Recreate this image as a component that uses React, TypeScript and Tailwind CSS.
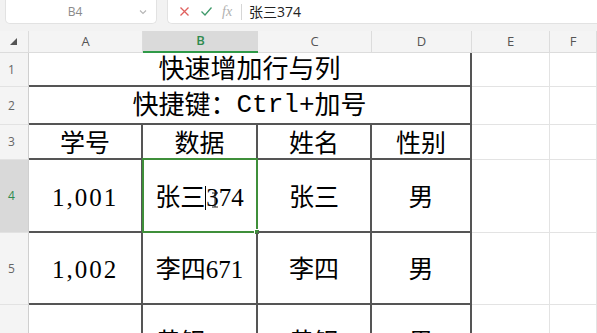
import React from 'react';

const rows = [
  ['学号', '数据', '姓名', '性别'],
  ['1,001', '张三374', '张三', '男'],
  ['1,002', '李四671', '李四', '男'],
  ['1,003', '黄银228', '黄银', '男'],
];

const cellFont = { fontFamily: "'Liberation Serif', 'Noto Sans CJK SC', serif" };

const RowHead: React.FC<{ n: number; active?: boolean }> = ({ n, active }) => (
  <div
    className={`flex items-center pl-[8px] text-[12px] border-r border-b border-r-[#cfcfcf] border-b-[#e2e2e2] ${
      active ? 'bg-[#d9d9d9] text-[#2f8a4e]' : 'bg-[#f4f4f4] text-[#666]'
    }`}
  >
    {n}
  </div>
);

const Blank: React.FC = () => <div className="border-r border-b border-[#e3e3e3]" />;

export default function App() {
  return (
    <div
      className="w-[597px] h-[333px] overflow-hidden bg-white flex flex-col"
      style={{ fontFamily: "'Open Sans', 'Noto Sans CJK SC', sans-serif" }}
    >
      {/* formula bar */}
      <div className="h-[31px] bg-[#f2f2f2] flex gap-[10px] pl-[5px] pb-[7px] shrink-0">
        <div className="w-[152px] bg-white border border-t-0 border-[#e2e2e2] rounded-b-[5px] flex items-center">
          <span className="flex-1 text-center text-[12px] text-[#8a8a8a] pl-[6px]">B4</span>
          <svg width="10" height="10" viewBox="0 0 10 10" className="mr-[8px]">
            <path d="M2 3.5 L5 6.5 L8 3.5" fill="none" stroke="#b5b5b5" strokeWidth="1.1" />
          </svg>
        </div>
        <div className="flex-1 bg-white border border-t-0 border-r-0 border-[#e2e2e2] rounded-bl-[5px] flex items-center pl-[11px]">
          <svg width="11" height="11" viewBox="0 0 11 11">
            <path d="M1.5 1.5 L9.5 9.5 M9.5 1.5 L1.5 9.5" stroke="#e0605e" strokeWidth="1.3" />
          </svg>
          <svg width="13" height="11" viewBox="0 0 13 11" className="ml-[10px]">
            <path d="M1.5 5.5 L5 9 L11.5 1.5" fill="none" stroke="#3f9a6a" strokeWidth="1.3" />
          </svg>
          <span className="ml-[9px] text-[14px] italic text-[#b0b0b0]" style={{ fontFamily: "'Liberation Serif', serif" }}>
            fx
          </span>
          <span className="ml-[9px] w-px h-[16px] bg-[#d6d6d6]" />
          <span className="ml-[7px] text-[14px] text-[#222]">张三374</span>
        </div>
      </div>

      {/* sheet */}
      <div className="grid grid-cols-[29px_114px_115px_114px_100px_78px_1fr] grid-rows-[22px_34px_38px_35px_73px_72px_73px]">
        {/* column headers */}
        <div className="bg-[#f4f4f4] border-r border-b border-[#dcdcdc] flex items-center pl-[10px]">
          <svg width="7" height="7" viewBox="0 0 7 7">
            <path d="M7 0 L7 7 L0 7 Z" fill="#555" />
          </svg>
        </div>
        {['A', 'B', 'C', 'D', 'E', 'F'].map((c) =>
          c === 'B' ? (
            <div
              key={c}
              className="bg-[#dadada] border-b-2 border-[#2f9a48] flex items-center justify-center text-[13px] font-semibold text-[#2f8a4e]"
            >
              {c}
            </div>
          ) : (
            <div
              key={c}
              className="bg-[#f4f4f4] border-r border-b border-[#dcdcdc] flex items-center justify-center text-[13px] text-[#555]"
            >
              {c}
            </div>
          )
        )}

        {/* row 1 */}
        <RowHead n={1} />
        <div
          className="col-span-4 border-b-2 border-r-2 border-[#555] flex items-center justify-center text-[26px] text-black"
          style={cellFont}
        >
          快速增加行与列
        </div>
        <Blank />
        <Blank />

        {/* row 2 */}
        <RowHead n={2} />
        <div
          className="col-span-4 border-b-2 border-r-2 border-[#555] flex items-center justify-center text-[26px] text-black"
          style={cellFont}
        >
          快捷键：<span style={{ fontFamily: "'Liberation Mono', monospace" }}>Ctrl+</span>加号
        </div>
        <Blank />
        <Blank />

        {rows.map((r, i) => (
          <React.Fragment key={i}>
            <RowHead n={i + 3} active={i === 1} />
            {r.map((v, j) => (
              <div
                key={j}
                className={`relative border-b-2 border-r-2 border-[#555] flex items-center justify-center pt-[4px] text-[25px] text-black ${
                  j === 0 && i > 0 ? 'tracking-[2px]' : ''
                }`}
                style={cellFont}
              >
                {i === 1 && j === 1 ? (
                  <>
                    <span>张三</span>
                    <span className="w-px h-[24px] bg-black" />
                    <span>374</span>
                    <svg width="8" height="16" viewBox="0 0 8 16" className="absolute left-[68px] top-[32px]">
                      <path d="M1 1 H7 M4 1 V15 M1 15 H7" stroke="#222" strokeWidth="1" fill="none" />
                    </svg>
                    <div className="absolute -left-[1px] -top-[2px] -right-[2px] -bottom-[2px] border-2 border-[#3f8f3a]" />
                    <div className="absolute -right-[4px] -bottom-[4px] w-[6px] h-[6px] bg-[#3f8f3a] border border-white" />
                  </>
                ) : (
                  v
                )}
              </div>
            ))}
            <Blank />
            <Blank />
          </React.Fragment>
        ))}
      </div>
    </div>
  );
}
